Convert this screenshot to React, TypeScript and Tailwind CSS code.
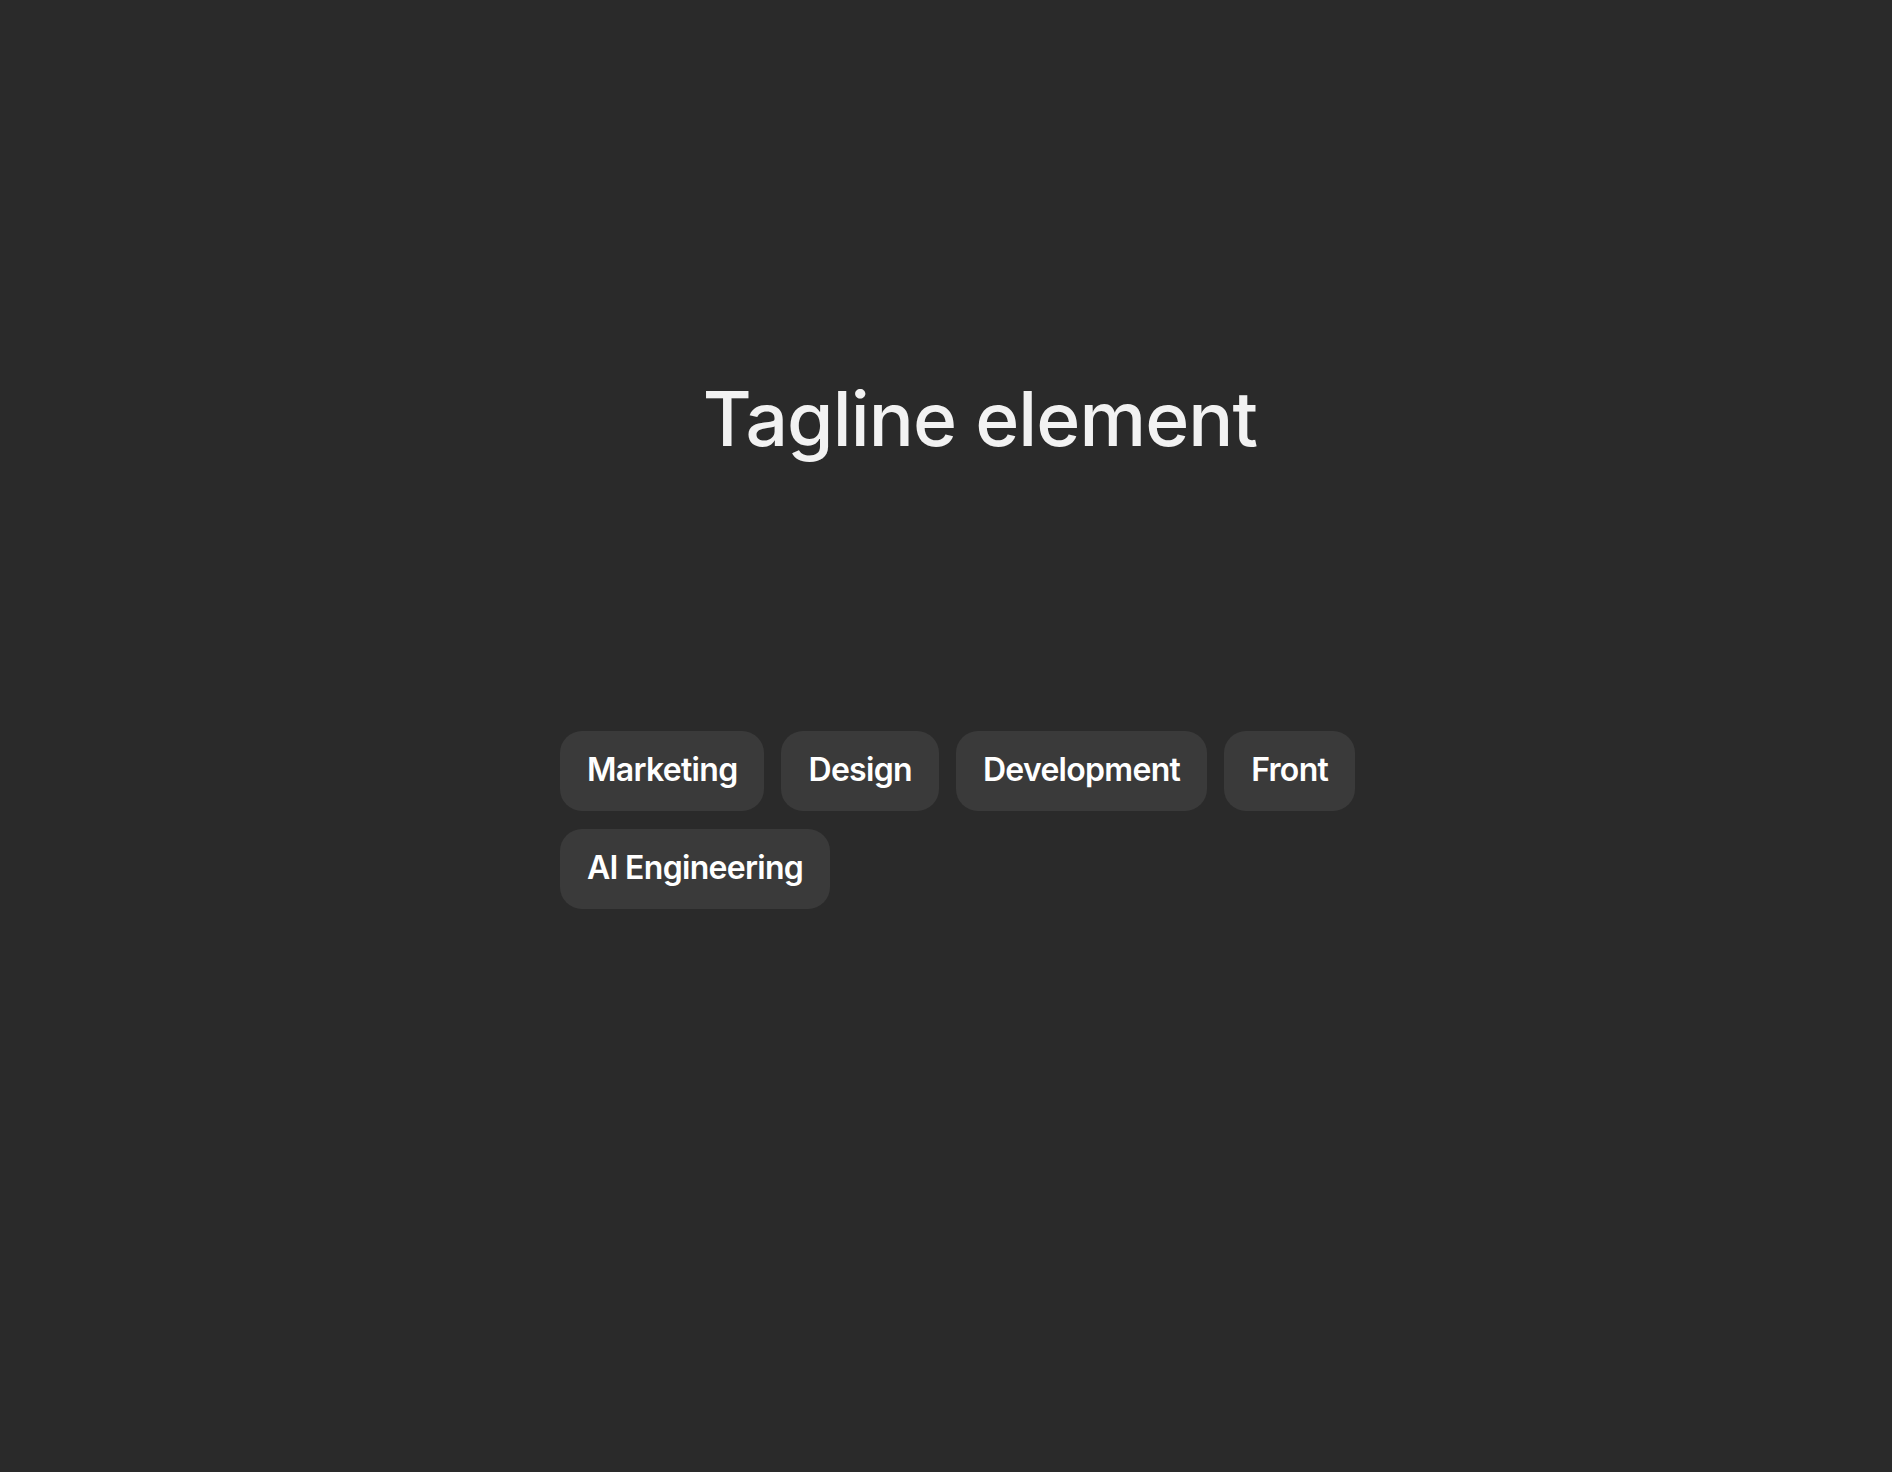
import React from 'react';

const tags = ['Marketing', 'Design', 'Development', 'Front', 'AI Engineering'];

const App = () => {
  return (
    <div className="min-h-screen w-full bg-[#2a2a2a] pl-[560px] pt-[374px]" style={{ fontFamily: 'Inter, "Noto Sans", sans-serif' }}>
      <div className="w-[840px]">
        <h1 className="text-center text-[75px] leading-[90px] font-medium tracking-[-0.9px] text-[#f2f2f2]">
          Tagline element
        </h1>

        <div className="mt-[267px] flex flex-wrap gap-x-[17px] gap-y-[18px]">
          {tags.map((tag) => (
            <span
              key={tag}
              className="rounded-[22px] bg-[#3a3a3a] px-[27px] pt-[19px] pb-[21px] text-[32px] leading-[40px] font-semibold tracking-[-0.7px] text-white"
            >
              {tag}
            </span>
          ))}
        </div>
      </div>
    </div>
  );
};

export default App;
